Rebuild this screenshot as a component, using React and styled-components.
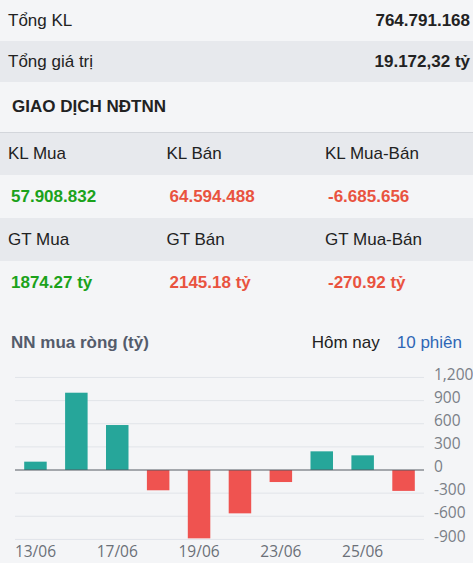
import React from 'react';
import styled, { createGlobalStyle } from 'styled-components';

const GlobalStyle = createGlobalStyle`
  body {
    margin: 0;
    background: #f4f5f7;
    font-family: 'Liberation Sans', Arial, sans-serif;
    color: #222;
  }
`;

const Wrapper = styled.div`
  width: 473px;
  background: #f4f5f7;
`;

const StatRow = styled.div`
  display: flex;
  align-items: center;
  justify-content: space-between;
  height: 41px;
  padding: 0 3px 0 8px;
  font-size: 17px;
  background: ${(p) => (p.shaded ? '#e7e9ed' : '#f4f5f7')};
`;

const StatValue = styled.span`
  font-weight: bold;
`;

const SectionTitle = styled.div`
  display: flex;
  align-items: center;
  height: 50px;
  padding-left: 12px;
  font-size: 17px;
  font-weight: bold;
  border-bottom: 1px solid #d3d6db;
`;

const Grid = styled.div`
  display: grid;
  grid-template-columns: repeat(3, 158.5px);
  align-items: center;
  height: ${(p) => p.h}px;
  padding-left: ${(p) => (p.values ? 11 : 8)}px;
  background: ${(p) => (p.values ? '#f4f5f7' : '#e7e9ed')};
  font-size: 17px;
  overflow: hidden;
`;

const Cell = styled.span`
  font-weight: ${(p) => (p.color ? 'bold' : 'normal')};
  color: ${(p) => p.color || '#222'};
  white-space: nowrap;
`;

const ChartHead = styled.div`
  display: flex;
  align-items: center;
  justify-content: space-between;
  padding: 28px 11px 0 11px;
  height: 20px;
  font-size: 17px;
`;

const ChartTitle = styled.span`
  font-weight: bold;
  color: #545c6b;
`;

const Tabs = styled.div`
  display: flex;
  gap: 17px;
`;

const Tab = styled.span`
  color: ${(p) => (p.active ? '#2e66b5' : '#222')};
`;

const ChartSvg = styled.svg`
  display: block;
  font-family: 'Open Sans', sans-serif;
`;

const GREEN = '#1ba21b';
const RED = '#e9533f';

const flows = [108, 1002, 583, -263, -886, -562, -156, 242, 190, -270.92];
const days = ['13/06', '', '17/06', '', '19/06', '', '23/06', '', '25/06', ''];
const ticks = [1200, 900, 600, 300, 0, -300, -600, -900];

const zeroY = 117;
const scale = 23.14 / 300;
const left = 15;
const right = 424;
const band = (right - left) / flows.length;
const barW = 22.5;

function FlowChart() {
  const yOf = (v) => zeroY - v * scale;
  return (
    <ChartSvg width="473" height="210">
      {ticks.map((t) => (
        <g key={t}>
          {t !== 0 && (
            <line x1={left} x2={right} y1={yOf(t)} y2={yOf(t)} stroke="#e1e4e9" strokeWidth="1" />
          )}
          <text x="434" y={yOf(t) - 2} dominantBaseline="middle" fontSize="15.5" fill="#7a7f87">
            {t.toLocaleString('en-US')}
          </text>
        </g>
      ))}
      {flows.map((v, i) => {
        const x = left + i * band + (band - barW) / 2;
        return (
          <rect
            key={i}
            x={x}
            y={v >= 0 ? yOf(v) : zeroY}
            width={barW}
            height={Math.abs(v) * scale}
            fill={v >= 0 ? '#26a69a' : '#ef5350'}
          />
        );
      })}
      <line x1={left} x2={right} y1={zeroY} y2={zeroY} stroke="#555b63" strokeWidth="1" />
      {days.map((d, i) =>
        d ? (
          <text key={i} x={left + i * band + band / 2} y="200" textAnchor="middle" dominantBaseline="middle" fontSize="15.5" fill="#6b7078">
            {d}
          </text>
        ) : null
      )}
    </ChartSvg>
  );
}

export default function App() {
  return (
    <Wrapper>
      <GlobalStyle />
      <StatRow>
        <span>Tổng KL</span>
        <StatValue>764.791.168</StatValue>
      </StatRow>
      <StatRow shaded>
        <span>Tổng giá trị</span>
        <StatValue>19.172,32 tỷ</StatValue>
      </StatRow>
      <SectionTitle>GIAO DỊCH NĐTNN</SectionTitle>
      <Grid h={42}>
        <Cell>KL Mua</Cell>
        <Cell>KL Bán</Cell>
        <Cell>KL Mua-Bán</Cell>
      </Grid>
      <Grid h={43} values>
        <Cell color={GREEN}>57.908.832</Cell>
        <Cell color={RED}>64.594.488</Cell>
        <Cell color={RED}>-6.685.656</Cell>
      </Grid>
      <Grid h={43}>
        <Cell>GT Mua</Cell>
        <Cell>GT Bán</Cell>
        <Cell>GT Mua-Bán</Cell>
      </Grid>
      <Grid h={44} values>
        <Cell color={GREEN}>1874.27 tỷ</Cell>
        <Cell color={RED}>2145.18 tỷ</Cell>
        <Cell color={RED}>-270.92 tỷ</Cell>
      </Grid>
      <ChartHead>
        <ChartTitle>NN mua ròng (tỷ)</ChartTitle>
        <Tabs>
          <Tab>Hôm nay</Tab>
          <Tab active>10 phiên</Tab>
        </Tabs>
      </ChartHead>
      <FlowChart />
    </Wrapper>
  );
}
